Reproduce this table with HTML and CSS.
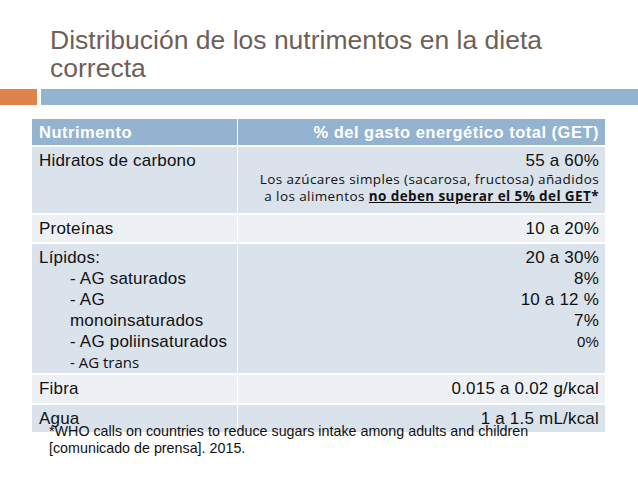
FILE: index.html
```html
<!DOCTYPE html>
<html>
<head>
<meta charset="utf-8">
<link rel="stylesheet" href="styles.css">
</head>
<body>
<div class="slide">
  <h1 class="title">Distribución de los nutrimentos en la dieta<br>correcta</h1>
  <div class="rule"><div class="rule-orange"></div><div class="rule-blue"></div></div>
  <div class="table">
    <div class="cell head">Nutrimento</div>
    <div class="cell head right">% del gasto energético total (GET)</div>

    <div class="cell dark">Hidratos de carbono</div>
    <div class="cell dark right">
      <div>55 a 60%</div>
      <div class="note">Los azúcares simples (sacarosa, fructosa) añadidos<br>a los alimentos <b><u>no deben superar el 5% del GET</u>*</b></div>
    </div>

    <div class="cell light">Proteínas</div>
    <div class="cell light right">10 a 20%</div>

    <div class="cell dark">
      <div>Lípidos:</div>
      <div class="sub">- AG saturados</div>
      <div class="sub">- AG<br>monoinsaturados</div>
      <div class="sub">- AG poliinsaturados</div>
      <div class="sub small">- AG trans</div>
    </div>
    <div class="cell dark right">
      <div>20 a 30%</div>
      <div>8%</div>
      <div>10 a 12 %</div>
      <div>7%</div>
      <div class="zero">0%</div>
    </div>

    <div class="cell light">Fibra</div>
    <div class="cell light right">0.015 a 0.02 g/kcal</div>

    <div class="cell dark">Agua</div>
    <div class="cell dark right">1 a 1.5 mL/kcal</div>
    <p class="foot">*WHO calls on countries to reduce sugars intake among adults and children<br>[comunicado de prensa]. 2015.</p>
  </div>
</div>
</body>
</html>
```
FILE: styles.css
```css
html, body { margin: 0; padding: 0; background: #fff; }
.slide { width: 638px; height: 479px; position: relative; overflow: hidden; font-family: "Liberation Sans", Arial, sans-serif; color: #111; }
.title { margin: 0; padding: 26px 0 0 50px; font-weight: normal; font-size: 26.5px; line-height: 28px; color: #6e5f59; height: 57px; }
.rule { display: flex; gap: 4px; height: 16px; margin-top: 6px; }
.rule-orange { width: 37px; background: #e0834a; }
.rule-blue { flex: 1; background: #93b3d1; }
.table { position: relative; margin: 14px 0 0 32px; width: 573px; display: grid; grid-template-columns: 205px 1fr; grid-template-rows: 26px 66px 27px 129px 28px 27px; gap: 2px 1px; background: #fff; }
.cell { padding: 3px 6px 0 7px; font-size: 17px; line-height: 21px; letter-spacing: 0.2px; }
.head { background: #93b3d1; color: #fff; font-weight: bold; font-size: 16.5px; padding-top: 0; line-height: 26px; letter-spacing: 0.5px; }
.right { text-align: right; }
.dark { background: #dae2eb; }
.light { background: #edf1f6; }
.note { font-family: "Open Sans", sans-serif; font-size: 13.5px; line-height: 17px; letter-spacing: 0.4px; margin-top: 0; }
.sub { padding-left: 31px; }
.small { font-family: "Open Sans", sans-serif; font-size: 15px; letter-spacing: 0; }
.zero { font-size: 15px; }
.foot { position: absolute; left: 17px; top: 304px; margin: 0; font-size: 14.3px; line-height: 17px; color: #111; }
```
